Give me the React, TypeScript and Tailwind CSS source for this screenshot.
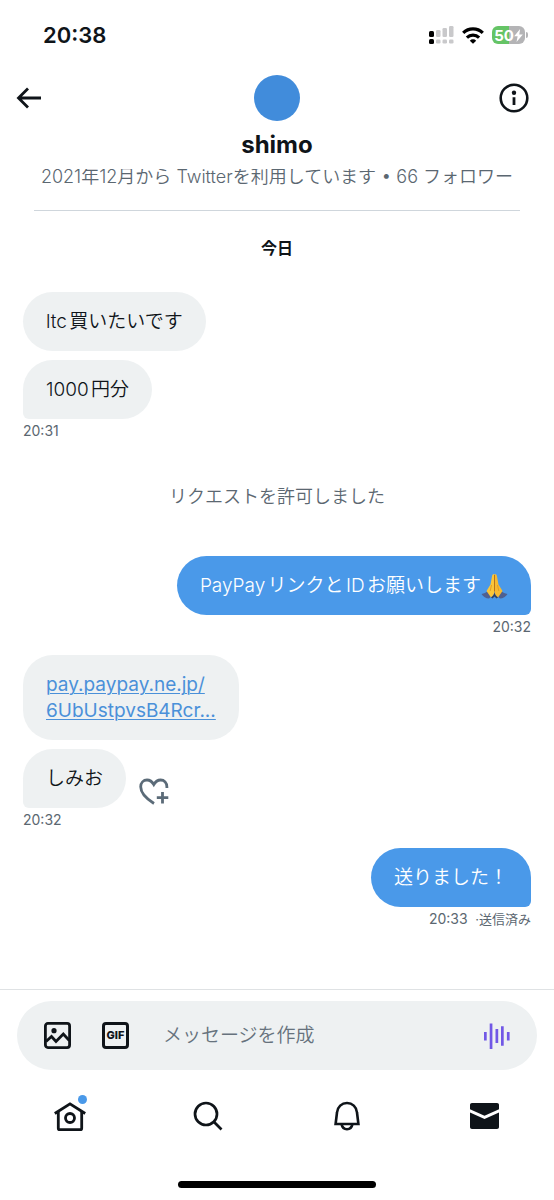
import { useState, type ReactNode } from 'react';

interface Message {
  id: number;
  from: 'me' | 'them';
  content: ReactNode;
  tail?: boolean;
  time?: string;
  status?: string;
  reactable?: boolean;
}

const requestMessages: Message[] = [
  { id: 1, from: 'them', content: 'ltc買いたいです' },
  { id: 2, from: 'them', content: '1000円分', tail: true, time: '20:31' },
];

const messages: Message[] = [
  {
    id: 3,
    from: 'me',
    content: (
      <>
        PayPayリンクとIDお願いします
        <PrayEmoji />
      </>
    ),
    tail: true,
    time: '20:32',
  },
  {
    id: 4,
    from: 'them',
    content: (
      <a href="#" className="font-normal text-[#4a90d9] underline decoration-1 underline-offset-2">
        pay.paypay.ne.jp/
        <br />
        6UbUstpvsB4Rcr...
      </a>
    ),
  },
  { id: 5, from: 'them', content: 'しみお', tail: true, time: '20:32', reactable: true },
  { id: 6, from: 'me', content: '送りました！', tail: true, time: '20:33', status: '送信済み' },
];

function PrayEmoji() {
  return (
    <svg role="img" aria-label="お願い" width="27" height="27" viewBox="0 0 27 27" className="-my-1 inline-block align-middle">
      <path d="M.5 21c2.500-.5 4.500-1.500 6.500-3l4 5-3 2.500C5 25.500 2 23.500.5 21z" fill="#4f6090" />
      <path d="M26.500 21c-2.500-.5-4.500-1.500-6.500-3l-4 5 3 2.500c3 0 6-2 7.500-4.500z" fill="#4f6090" />
      <path d="M12.600 1c-1.200.3-1.500 1.500-1.700 3L9.500 11.500 5.500 18l4.500 6.500c2-1.500 3.500-3.500 3.500-6.500V1.500z" fill="#fbc638" />
      <path d="M14.400 1c1.200.3 1.500 1.500 1.700 3l1.400 7.500L21.500 18 17 24.500c-2-1.500-3.500-3.500-3.500-6.500V1.500z" fill="#f7ba30" />
      <path d="M13.500 2v16.500" fill="none" stroke="#b8741a" strokeWidth="1" />
      <path d="M10 24.500c2-1.500 3.200-3 3.500-5.500.3 2.500 1.500 4 3.500 5.500l-1.500 1-2-2-2 2z" fill="#33405f" />
      <path d="M10.500 12L9.200 18M16.500 12l1.300 6" fill="none" stroke="#dc9420" strokeWidth=".8" />
    </svg>
  );
}

function StatusBar() {
  return (
    <div className="flex h-[70px] items-center justify-between pr-[26px] pl-[43px]">
      <span className="text-[22px] font-semibold">20:38</span>
      <div className="flex items-center gap-2">
        <svg width="25" height="18" viewBox="0 0 25 18" aria-hidden="true">
          <g fill="#000">
            <rect x="0" y="5" width="5" height="6" rx="1.500" />
            <rect x="0" y="13" width="5" height="5" rx="1.500" />
          </g>
          <g fill="#c9c9cb">
            <rect x="7" y="4" width="4.500" height="7" rx="1.300" />
            <rect x="13.500" y="2" width="4.500" height="9" rx="1.300" />
            <rect x="20" y="0" width="4.500" height="11" rx="1.300" />
            <rect x="7" y="13.500" width="4.500" height="4" rx="1.300" />
            <rect x="13.500" y="13.500" width="4.500" height="4" rx="1.300" />
            <rect x="20" y="13.500" width="4.500" height="4" rx="1.300" />
          </g>
        </svg>
        <svg width="22" height="17" viewBox="0 0 22 17" fill="none" stroke="#000" strokeWidth="3.200" aria-hidden="true">
          <path d="M1.200 5.900a14 14 0 0 1 19.600 0" />
          <path d="M4.900 10.600a8.800 8.800 0 0 1 12.200 0" />
          <path d="M11 16.800L7.800 13.700a4.500 4.500 0 0 1 6.400 0z" fill="#000" stroke="none" />
        </svg>
        <div className="flex items-center gap-px">
          <div className="flex h-[18px] w-[33px] items-center justify-center rounded-md bg-linear-to-r from-[#65c466] from-50% to-[#b4b4b6] to-50% text-[15px] leading-none font-bold text-white">
            50
            <svg width="9" height="13" viewBox="0 0 8 12" fill="currentColor" aria-hidden="true">
              <path d="M5.500 0L0 6.800h3.200L2.200 12 8 5H4.700z" />
            </svg>
          </div>
          <span className="h-[6px] w-[2px] rounded-r-full bg-[#b4b4b6]" />
        </div>
      </div>
    </div>
  );
}

function Header() {
  return (
    <header className="relative z-10 bg-white pb-2">
      <StatusBar />
      <div className="grid grid-cols-[1fr_auto_1fr] items-center px-4 pt-[5px]">
        <button type="button" aria-label="戻る" className="justify-self-start">
          <svg width="26" height="22" viewBox="0 0 26 22" fill="none" stroke="currentColor" strokeWidth="2.800">
            <path d="M25 11H3M12 1.500L2.500 11l9.500 9.500" />
          </svg>
        </button>
        <span className="size-[46px] rounded-full bg-[#418cdb]" />
        <button type="button" aria-label="会話情報" className="justify-self-end px-[9px]">
          <svg width="30" height="30" viewBox="0 0 30 30">
            <circle cx="15" cy="15" r="13.300" fill="none" stroke="currentColor" strokeWidth="2.600" />
            <circle cx="15" cy="9.800" r="2.200" fill="currentColor" />
            <path d="M13.600 14.300h2.800v7.700h-2.800z" fill="currentColor" />
          </svg>
        </button>
      </div>
      <h1 className="pt-2 text-center text-2xl leading-8 font-bold">shimo</h1>
    </header>
  );
}

function HeartPlus() {
  return (
    <svg width="30" height="27" viewBox="0 0 30 27" fill="none" stroke="currentColor" strokeWidth="2.800">
      <path d="M15 25.500C7 20.500 1.700 15 1.700 8.800 1.700 4.800 4.500 2 8 2c3 0 5.200 1.700 6.800 4.500C16.400 3.700 18.600 2 21.600 2c3.600 0 6.300 2.800 6.300 7v1" />
      <path d="M23.500 14v11.500M17.800 19.700h11.500" />
    </svg>
  );
}

function MessageRow({ message }: { message: Message }) {
  const mine = message.from === 'me';
  const color = mine ? 'bg-[#4a99e9] text-white' : 'bg-[#eef1f2]';
  const corner = message.tail ? (mine ? 'rounded-br-md' : 'rounded-bl-md') : '';

  return (
    <li className={`flex flex-col ${mine ? 'items-end' : 'items-start'} ${message.time ? 'mb-4' : 'mb-[9px]'}`}>
      <div className="flex items-end gap-[13px]">
        <div className={`rounded-[30px] px-[23px] pt-[17px] pb-4 text-[19px] leading-[26px] ${color} ${corner}`}>
          {message.content}
        </div>
        {message.reactable && (
          <button type="button" aria-label="リアクションを追加" className="pb-[3px] text-[#5b6b78]">
            <HeartPlus />
          </button>
        )}
      </div>
      {message.time && (
        <p className="text-sm leading-6 font-normal text-[#5b6771]">
          {message.time}
          {message.status && <span className="pl-1 text-[13px]"> ·{message.status}</span>}
        </p>
      )}
    </li>
  );
}

function Composer() {
  const [text, setText] = useState('');

  return (
    <div className="border-t border-[#dfe2e4] px-[17px] pt-[11px]">
      <form className="flex h-[69px] items-center rounded-full bg-[#eef1f2] px-[27px]">
        <button type="button" aria-label="画像" className="shrink-0">
          <svg width="27" height="27" viewBox="0 0 27 27" fill="none" stroke="currentColor" strokeWidth="2.800">
            <rect x="1.400" y="1.400" width="24.200" height="24.200" rx="2.500" />
            <circle cx="10" cy="8.700" r="2.600" fill="currentColor" stroke="none" />
            <path d="M2 19.500l5.500-5 4.500 5 7.300-7.500 6 6.500" />
          </svg>
        </button>
        <button
          type="button"
          className="ml-[31px] flex size-[27px] shrink-0 items-center justify-center rounded-sm border-[3px] border-current text-[11px] leading-none font-extrabold"
        >
          GIF
        </button>
        <input
          type="text"
          aria-label="メッセージ"
          placeholder="メッセージを作成"
          value={text}
          onChange={(e) => setText(e.target.value)}
          className="mx-[34px] min-w-0 flex-1 pt-[2px] text-[19px] outline-none placeholder:text-[#66727d]"
        />
        <button type="button" aria-label="音声" className="shrink-0">
          <svg width="26" height="26" viewBox="0 0 26 26" fill="#7158e6">
            <path d="M0 9h2.700v8.500H0zM5.700.5h2.700v25.500H5.700zM11.500 6h2.700v14h-2.700zM17 3.300h2.700v19.400H17zM22.900 9h2.700v8.500h-2.700z" />
          </svg>
        </button>
      </form>
    </div>
  );
}

function BottomNav() {
  return (
    <nav className="grid h-[92px] grid-cols-4 pl-px text-[#0f1419]">
      <a href="#" aria-label="ホーム" className="flex items-center justify-center">
        <span className="relative">
          <svg width="34" height="34" viewBox="0 0 34 34" fill="none" stroke="currentColor" strokeWidth="2.800">
            <path d="M1.800 14.500L17 4.800l15.200 9.700" />
            <path d="M5.300 12.500v16.700c0 .9.600 1.500 1.500 1.500h20.400c.9 0 1.500-.6 1.500-1.500V12.500" />
            <circle cx="17" cy="19" r="4.500" />
          </svg>
          <span className="absolute -top-1 right-0 size-[9px] rounded-full bg-[#4a99e9]" />
        </span>
      </a>
      <a href="#" aria-label="検索" className="flex items-center justify-center">
        <svg width="30" height="30" viewBox="0 0 30 30" fill="none" stroke="currentColor" strokeWidth="2.700">
          <circle cx="13" cy="13" r="11" />
          <path d="M20.800 20.800l7.700 7.700" />
        </svg>
      </a>
      <a href="#" aria-label="通知" className="flex items-center justify-center">
        <svg width="28" height="30" viewBox="0 0 28 30" fill="none" stroke="currentColor" strokeWidth="2.600">
          <path d="M2.600 23L4 11.500C4.500 5.800 8.700 2 14 2s9.500 3.800 10 9.500L25.400 23z" />
          <path d="M8.500 23c.6 3.200 2.700 5.200 5.500 5.200s4.900-2 5.500-5.200" />
        </svg>
      </a>
      <a href="#" aria-label="メッセージ" className="flex items-center justify-center">
        <svg width="29" height="26" viewBox="0 0 29 26" fill="currentColor">
          <path d="M0 6.300V2C0 .8.800 0 2 0h25c1.200 0 2 .8 2 2v4.300l-14.500 6.500z" />
          <path d="M0 9.500l14.500 6.500L29 9.500V24c0 1.200-.8 2-2 2H2c-1.200 0-2-.8-2-2z" />
        </svg>
      </a>
    </nav>
  );
}

export default function App() {
  return (
    <div
      lang="ja"
      className="flex min-h-screen flex-col bg-white font-['Inter','Noto_Sans_CJK_JP',sans-serif] font-[350] text-[#0f1419] [text-autospace:normal]"
    >
      <Header />

      <main className="flex-1 px-[23px]">
        {/* Profile summary, partly scrolled under the header */}
        <p className="mx-[11px] -mt-1 border-b border-[#cfd6dc] pb-[21px] text-center text-lg leading-6 whitespace-nowrap text-[#5b6771] [text-autospace:no-autospace]">
          2021年12月から Twitterを利用しています • 66 フォロワー
        </p>
        <h2 className="pt-[25px] text-center text-base leading-6 font-bold">今日</h2>

        <ul className="pt-8">
          {requestMessages.map((message) => (
            <MessageRow key={message.id} message={message} />
          ))}
        </ul>
        <p className="pt-6 pb-[45px] text-center text-lg leading-7 text-[#5b6771]">リクエストを許可しました</p>
        <ul>
          {messages.map((message) => (
            <MessageRow key={message.id} message={message} />
          ))}
        </ul>
      </main>

      <footer>
        <Composer />
        <BottomNav />
        <div className="pt-[19px] pb-3">
          <div className="mx-auto h-[7px] w-[198px] rounded-full bg-black" />
        </div>
      </footer>
    </div>
  );
}
